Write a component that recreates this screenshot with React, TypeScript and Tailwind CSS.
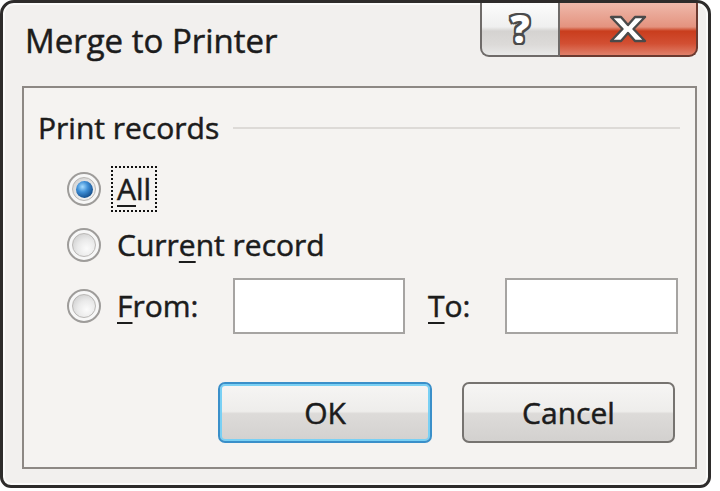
import React from "react"

const font = { fontFamily: '"Open Sans", "Noto Sans", sans-serif' }

function Radio({ checked }: { checked?: boolean }) {
  return (
    <div className="w-[34px] h-[34px] shrink-0 rounded-full border-2 border-[#9e9c9a] bg-[#f7f7f7] flex items-center justify-center">
      <div className="w-[24px] h-[24px] rounded-full border border-[#b9b7b5] bg-[radial-gradient(circle_at_62%_66%,#fbfbfb_0%,#eaeaea_45%,#c4c4c4_100%)] flex items-center justify-center">
        {checked && (
          <div className="w-[17px] h-[17px] rounded-full bg-[radial-gradient(circle_at_38%_34%,#a6dcff_0%,#3f8fd6_35%,#1a5797_70%,#0e3563_100%)]" />
        )}
      </div>
    </div>
  )
}

function Key({ children }: { children: React.ReactNode }) {
  return <span className="underline decoration-2 underline-offset-[5px]">{children}</span>
}

export default function App() {
  return (
    <div
      className="w-[720px] h-[491px] bg-white text-[#1c1c1c] [-webkit-text-stroke:0.5px_#1c1c1c]"
      style={font}
    >
      <div className="w-[711px] h-[488px] border-[3px] border-[#2e2c2b] rounded-t-[14px] rounded-b-[11px] bg-[#f2f0ee] shadow-[inset_0_0_0_2px_#fbfbfa] flex flex-col overflow-hidden">
        {/* title bar */}
        <div className="h-[83px] flex items-start shrink-0">
          <div className="pl-[22px] pt-[18px] text-[33px] leading-[40px]">Merge to Printer</div>
          <div className="ml-auto mr-[10px] flex h-[54px]">
            <div className="w-[80px] h-full border-2 border-t-0 border-[#6f6b69] rounded-bl-[9px] bg-[linear-gradient(to_bottom,#fcfcfc_0%,#efefef_46%,#d5d3d1_54%,#dcdad8_80%,#e9e9e8_100%)] flex items-center justify-center">
              <span className="text-[38px] font-extrabold leading-none text-white -mt-[2px] [-webkit-text-stroke:0] [text-shadow:2px_0_0_#4b4b4b,-2px_0_0_#4b4b4b,0_2px_0_#4b4b4b,0_-2px_0_#4b4b4b,2px_2px_0_#4b4b4b,-2px_-2px_0_#4b4b4b,2px_-2px_0_#4b4b4b,-2px_2px_0_#4b4b4b]">
                ?
              </span>
            </div>
            <div className="w-[138px] h-full border-2 border-t-0 border-l-0 border-[#6b3a30] rounded-br-[9px] bg-[linear-gradient(to_bottom,#efb9ab_0%,#e4937f_46%,#c93d1d_54%,#d24f33_78%,#e0806a_100%)] flex items-center justify-center">
              <svg width="40" height="30" viewBox="0 0 40 30">
                <path
                  d="M3 3 H13 L20 11 L27 3 H37 L25.5 15 L37 27 H27 L20 19 L13 27 H3 L14.5 15 Z"
                  fill="#ffffff"
                  stroke="#4a4a4a"
                  strokeWidth="2.4"
                  strokeLinejoin="round"
                />
              </svg>
            </div>
          </div>
        </div>

        {/* client panel */}
        <div className="ml-[19px] mr-[11px] mb-[16px] border-2 border-[#8d8884] bg-[#f5f3f1] pt-[22px] pb-[24px] flex flex-col">
          <div className="flex items-center pl-[14px] pr-[15px]">
            <span className="text-[30px] leading-[36px]">Print records</span>
            <div className="flex-1 ml-[14px] h-[2px] bg-[#dddad7]" />
          </div>

          <div className="mt-[20px] pl-[43px] flex flex-col gap-[15px] text-[30px] leading-[36px]">
            <div className="flex items-center h-[46px]">
              <Radio checked />
              <div className="ml-[10px] h-[46px] px-[4px] border-2 border-dotted border-[#111] flex items-center">
                <Key>A</Key>ll
              </div>
            </div>
            <div className="flex items-center h-[36px]">
              <Radio />
              <span className="ml-[16px]">
                Curr<Key>e</Key>nt record
              </span>
            </div>
            <div className="flex items-center h-[56px]">
              <Radio />
              <span className="ml-[16px] w-[116px]">
                <Key>F</Key>rom:
              </span>
              <div className="w-[172px] h-[56px] bg-white border-2 border-[#a6a4a2]" />
              <span className="ml-[23px] w-[77px]">
                <Key>T</Key>o:
              </span>
              <div className="w-[173px] h-[56px] bg-white border-2 border-[#a6a4a2]" />
            </div>
          </div>

          <div className="mt-[48px] pr-[20px] flex justify-end gap-[30px] text-[30px]">
            <button className="w-[214px] h-[61px] rounded-[7px] border-2 border-[#3a8fc9] shadow-[inset_0_0_0_2px_#79d0f4] bg-[linear-gradient(to_bottom,#f6f5f4_0%,#eeedeb_48%,#dddbd9_52%,#d3d1cf_100%)] flex items-center justify-center">
              OK
            </button>
            <button className="w-[213px] h-[61px] rounded-[7px] border-2 border-[#767370] bg-[linear-gradient(to_bottom,#f6f5f4_0%,#eeedeb_48%,#dddbd9_52%,#d3d1cf_100%)] flex items-center justify-center">
              Cancel
            </button>
          </div>
        </div>
      </div>
    </div>
  )
}
